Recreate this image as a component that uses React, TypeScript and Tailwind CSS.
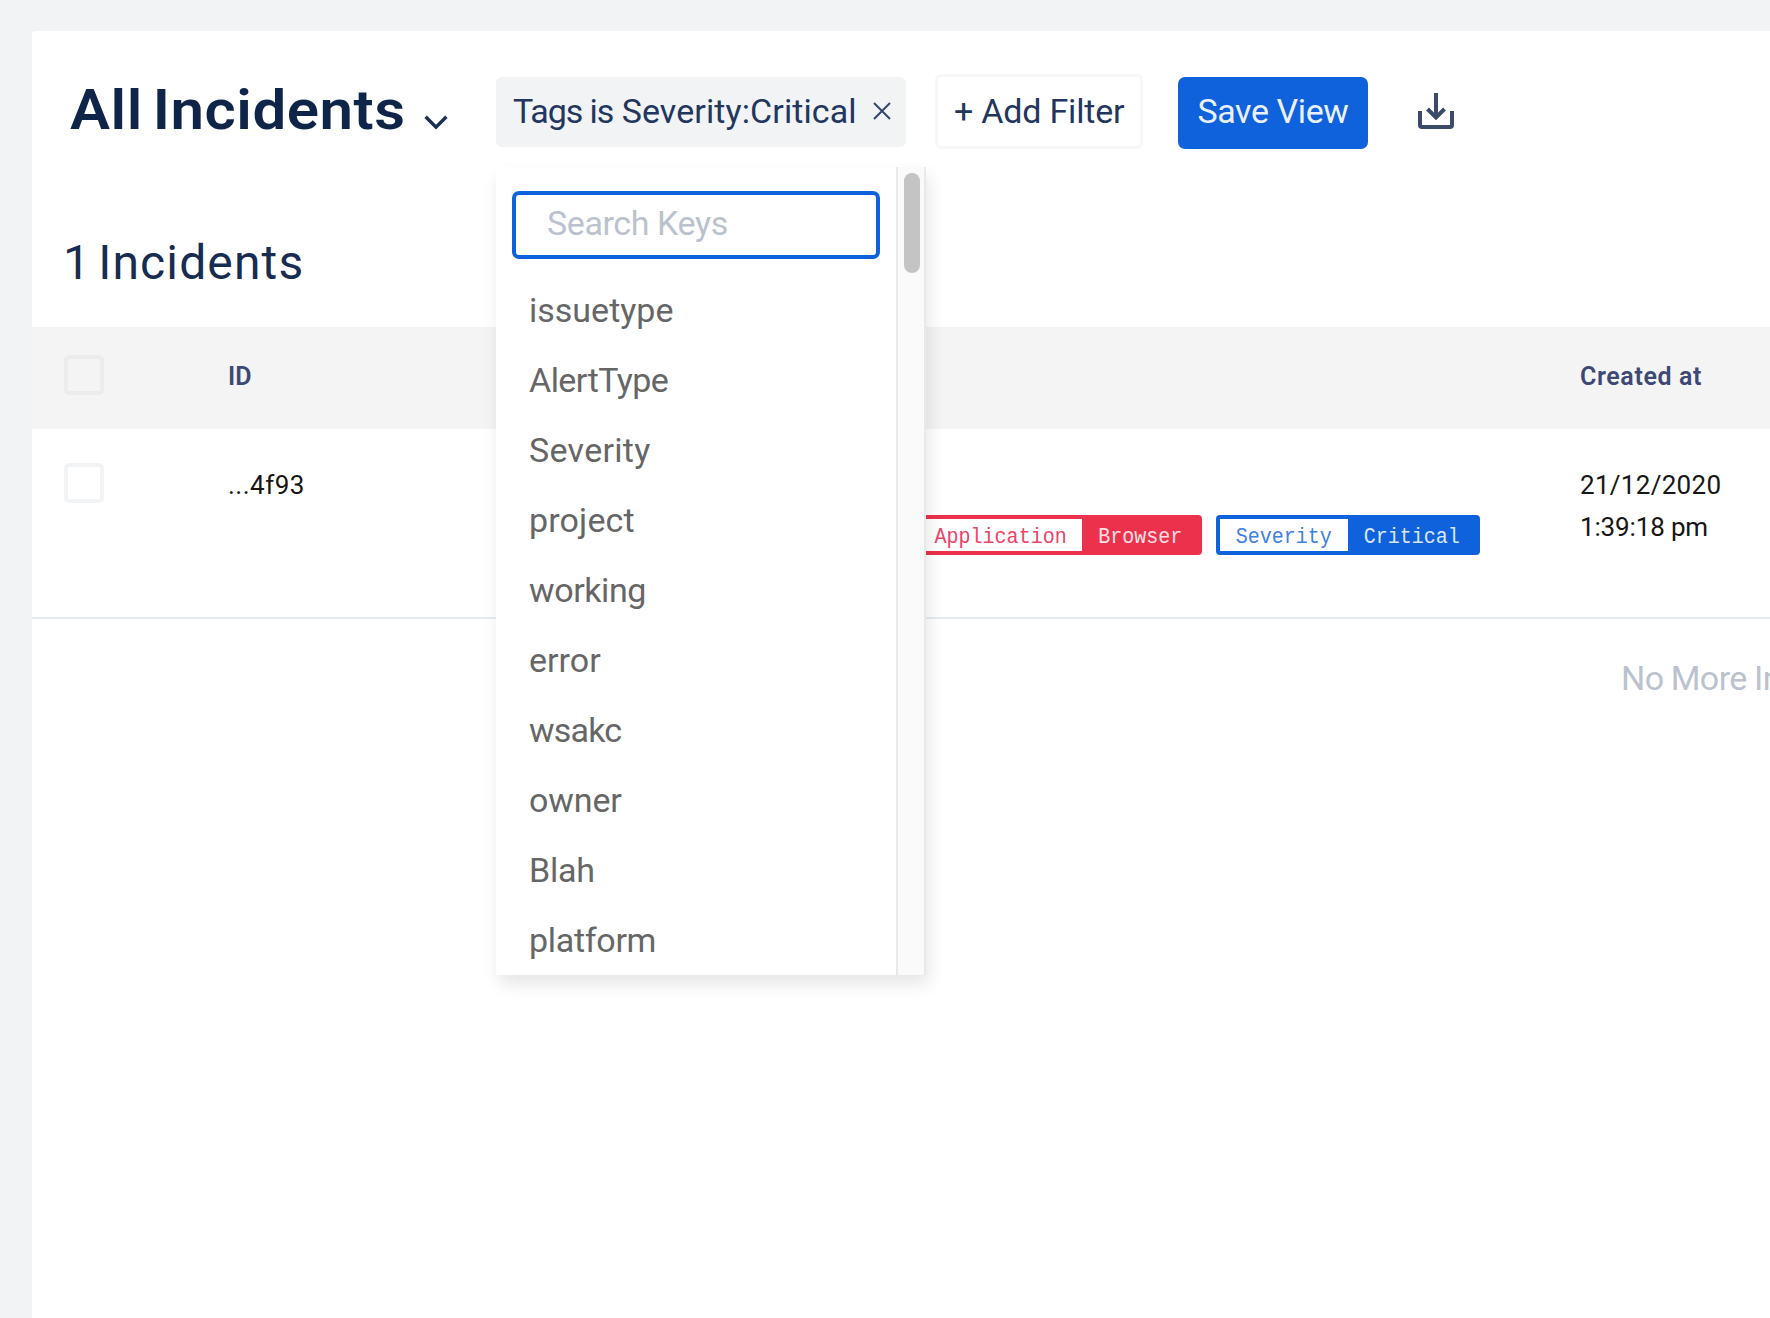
const keys = [
  { name: "issuetype", tracking: "tracking-[0px]" },
  { name: "AlertType", tracking: "tracking-[-0.55px]" },
  { name: "Severity", tracking: "tracking-[0.3px]" },
  { name: "project", tracking: "tracking-[0.15px]" },
  { name: "working", tracking: "tracking-[-0.4px]" },
  { name: "error", tracking: "tracking-[0px]" },
  { name: "wsakc", tracking: "tracking-[-0.8px]" },
  { name: "owner", tracking: "tracking-[-0.1px]" },
  { name: "Blah", tracking: "tracking-[-0.2px]" },
  { name: "platform", tracking: "tracking-[-0.3px]" },
];

function Checkbox({ className }: { className: string }) {
  return <span className={`block size-10 shrink-0 rounded-[5px] border-4 ${className}`} />;
}

function ChevronDown() {
  return (
    <svg className="mt-[41px] h-[15px] w-6 shrink-0" viewBox="0 0 24 15" fill="none" stroke="#1c2f52" strokeWidth="3.4">
      <path d="M1.6 1.8 12 12.2 22.4 1.8" />
    </svg>
  );
}

function CloseIcon() {
  return (
    <svg className="h-[18px] w-[18px] shrink-0" viewBox="0 0 18 18" fill="none" stroke="#33456a" strokeWidth="2">
      <path d="M1 1 17 17M17 1 1 17" />
    </svg>
  );
}

function DownloadIcon() {
  return (
    <svg className="mt-[18px] h-[38px] w-9 shrink-0" viewBox="0 0 36 38" fill="none" stroke="#3b4a66" strokeWidth="4">
      <path d="M2 19V33a2 2 0 0 0 2 2H32a2 2 0 0 0 2-2V19" />
      <path d="M18 1V25M9.5 17 18 25.5 26.5 17" />
    </svg>
  );
}

function Tag({ name, value, color, text, nameWidth, valueWidth }: { name: string; value: string; color: string; text: string; nameWidth: string; valueWidth: string }) {
  return (
    <div className={`flex h-10 rounded-[4px] border-4 font-['Liberation_Mono'] text-[22px] leading-[37px] ${color}`}>
      <span className={`flex h-8 justify-center bg-white ${text} ${nameWidth}`}>
        <span className="scale-x-[0.91]">{name}</span>
      </span>
      <span className={`flex h-8 justify-center text-white/85 ${valueWidth}`}>
        <span className="scale-x-[0.91]">{value}</span>
      </span>
    </div>
  );
}

function KeyMenu() {
  return (
    <div className="absolute top-[90px] left-0 z-10 flex h-[808px] w-[430px] overflow-hidden bg-white shadow-[3px_9px_16px_rgba(0,0,0,0.1)]">
      <div className="w-[400px] pt-6">
        <div className="ml-4 h-[68px] w-[368px] rounded-[7px] border-4 border-[#0f62db] pl-[31px] text-[34px] leading-[57px] tracking-[-0.4px] text-[#bbc2ce]">
          Search Keys
        </div>
        <ul className="mt-4 pl-[33px] text-[34px] leading-[70px] text-[#666]">
          {keys.map((key) => (
            <li key={key.name} className={`h-[70px] ${key.tracking}`}>{key.name}</li>
          ))}
        </ul>
      </div>
      <div className="w-[30px] border-x-2 border-[#e9e9e9] bg-[#fafafa] pt-[6px] pl-[6px]">
        <div className="h-[100px] w-4 rounded-full bg-[#c4c4c4]" />
      </div>
    </div>
  );
}

export default function App() {
  return (
    <div className="h-[1318px] w-[1770px] overflow-hidden bg-[#f2f3f5] pt-[31px] pl-8 font-['Roboto',sans-serif] text-[#0f2449]">
      <main className="h-full rounded-tl-[4px] bg-white whitespace-nowrap">
        <header className="flex h-[203px] items-start pt-[43px] pl-[38px] text-[34px]">
          <h1 className="mt-1 w-[354px] text-[56px] leading-[64px] font-semibold tracking-[0.5px] [word-spacing:-5px]">
            <span className="inline-block origin-left scale-x-[1.07]">All Incidents</span>
          </h1>
          <ChevronDown />
          <div className="relative mt-[3px] ml-12">
            <div className="flex h-[70px] w-[410px] items-center rounded-[6px] bg-[#f2f3f5] pl-[17px] text-[#22365e]">
              <span className="w-[360px] pb-[2px] leading-[68px] tracking-[0.1px]">
                <span className="tracking-[-1.1px]">Tags is</span> Severity:Critical
              </span>
              <span className="-mt-[2px]">
                <CloseIcon />
              </span>
            </div>
            <KeyMenu />
          </div>
          <button className="ml-[29px] h-[75px] w-[208px] rounded-[6px] border-[3px] border-[#f5f7f8] pl-4 text-left leading-[67px] tracking-[-0.2px] text-[#22365e]">
            + Add Filter
          </button>
          <button className="mt-[3px] ml-[35px] h-[72px] w-[190px] rounded-[7px] bg-[#0f62db] pb-[3px] leading-[69px] tracking-[-0.4px] text-[#e9f1fd]">
            Save View
          </button>
          <div className="ml-[50px]">
            <DownloadIcon />
          </div>
        </header>

        <h2 className="h-[93px] pl-[31px] text-[48px] leading-[58px] tracking-[1.15px] text-[#182b50] [word-spacing:-6px]">1 Incidents</h2>

        <div className="flex h-[102px] items-start bg-[#f4f4f4] pl-8 text-[25px] leading-[30px] font-semibold text-[#3d4873]">
          <Checkbox className="mt-7 border-[#ececed]" />
          <span className="mt-[35px] ml-[124px] w-[1352px]">ID</span>
          <span className="mt-[35px] tracking-[0.6px]">Created at</span>
        </div>

        <div className="flex h-[190px] items-start border-b-2 border-[#e6ebf1] pl-8 text-[26px] leading-[42px] text-[#161616]">
          <Checkbox className="mt-[34px] border-[#f1f3f5]" />
          <span className="mt-[35px] ml-[124px] w-[688px] tracking-[0.5px]">...4f93</span>
          <div className="mt-[86px] flex w-[664px] gap-[14px]">
            <Tag name="Application" value="Browser" color="border-[#ec314c] bg-[#ec314c]" text="text-[#ee4468]" nameWidth="w-[162px]" valueWidth="w-[116px]" />
            <Tag name="Severity" value="Critical" color="border-[#0f62db] bg-[#0f62db]" text="text-[#3f7fe2]" nameWidth="w-[128px]" valueWidth="w-[128px]" />
          </div>
          <div className="mt-[35px]">
            <div className="tracking-[0.3px]">21/12/2020</div>
            <div className="tracking-[-0.15px]">1:39:18 pm</div>
          </div>
        </div>

        <p className="h-[100px] overflow-hidden pt-[39px] pl-[1589px] text-[34px] leading-[40px] tracking-[-0.6px] text-[#bbc2ce] [word-spacing:-0.5px]">No More Incidents</p>
      </main>
    </div>
  );
}
